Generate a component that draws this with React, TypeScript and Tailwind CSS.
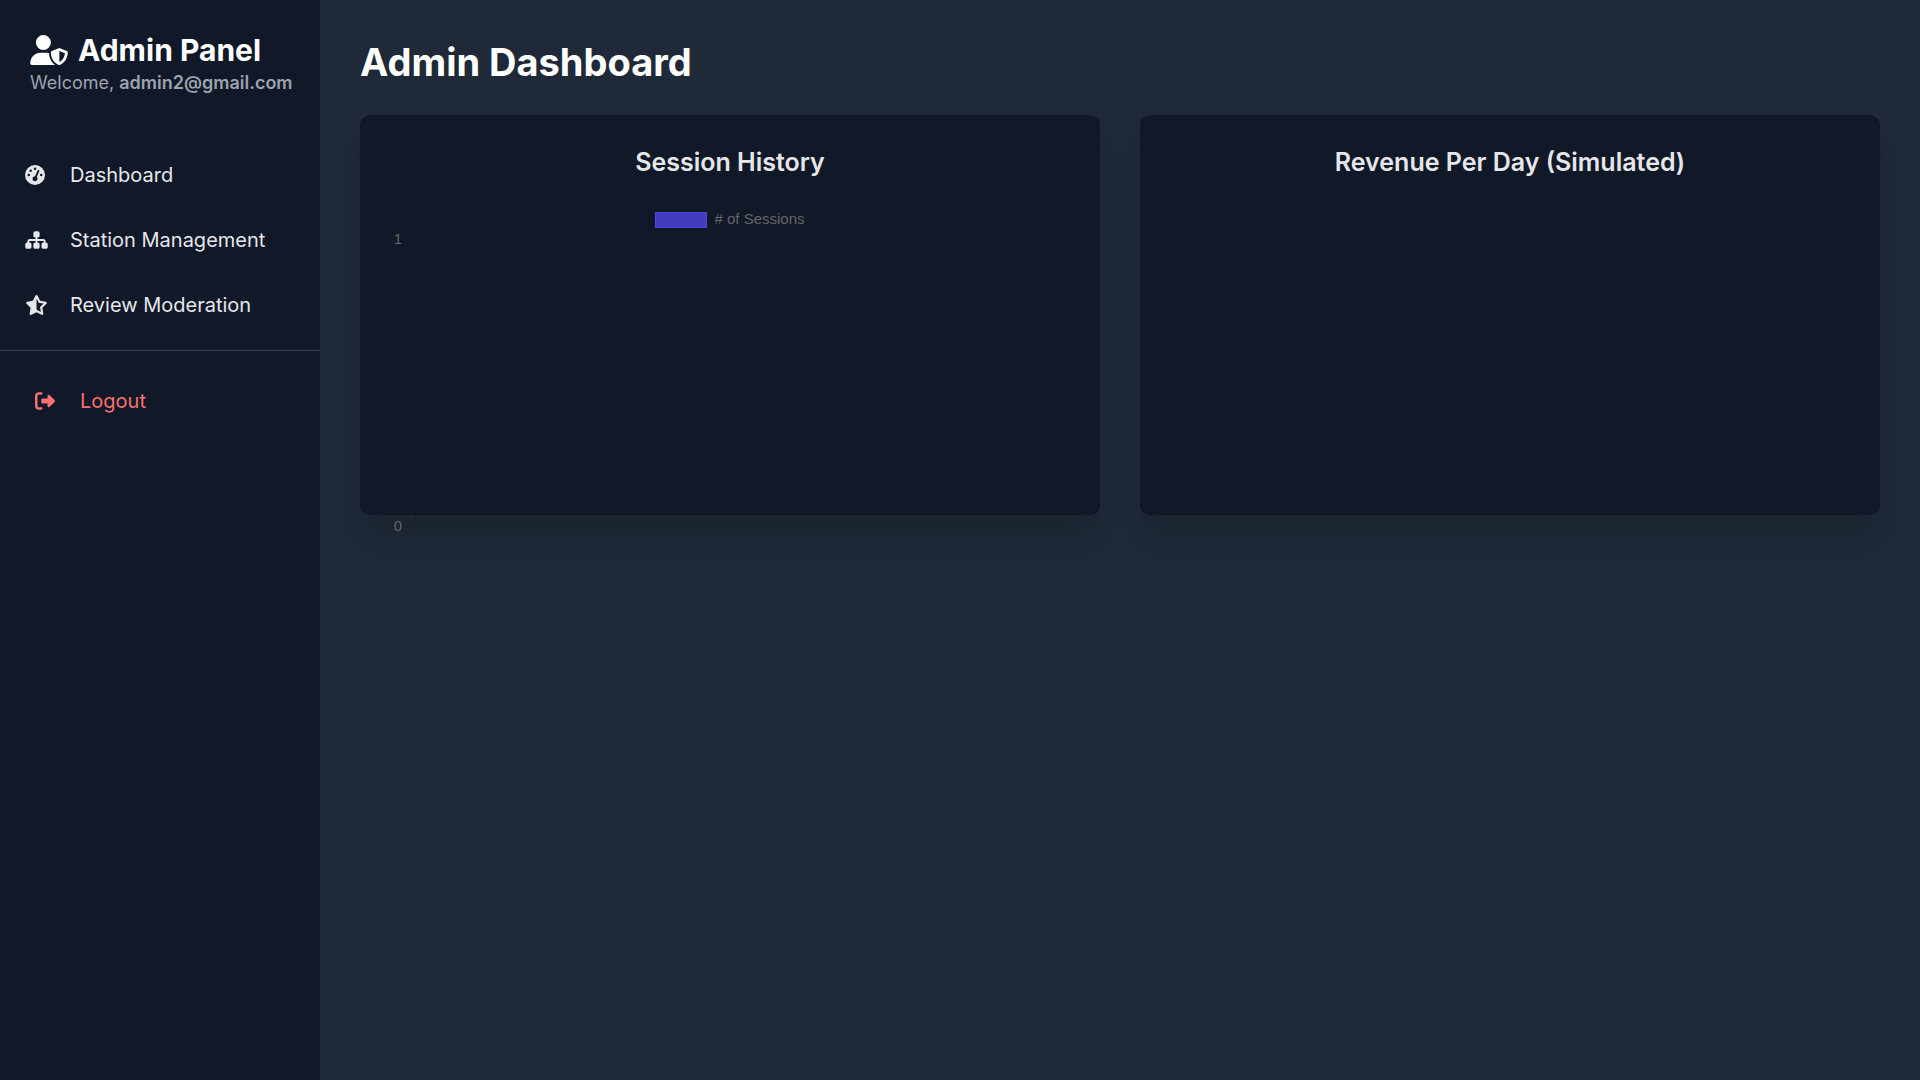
import React from "react";
import {
  FaGaugeHigh,
  FaRightFromBracket,
  FaSitemap,
  FaStarHalfStroke,
  FaUserShield,
} from "react-icons/fa6";

const navItems = [
  { label: "Dashboard", icon: <FaGaugeHigh className="h-5 w-5" /> },
  { label: "Station Management", icon: <FaSitemap className="h-5 w-[23px]" /> },
  { label: "Review Moderation", icon: <FaStarHalfStroke className="h-5 w-[23px]" /> },
];

function Sidebar() {
  return (
    <aside className="w-80 shrink-0 bg-[#111827]">
      <header className="px-[30px] pt-[30px] pb-[30px]">
        <h2 className="flex items-center gap-[10px] text-[30px] leading-10 font-bold text-white">
          <FaUserShield className="h-[30px] w-[38px] shrink-0" />
          Admin Panel
        </h2>
        <p className="text-[18px] leading-[25px] whitespace-nowrap text-[#9ca3af]">
          Welcome, <strong className="font-semibold">admin2@gmail.com</strong>
        </p>
      </header>
      <nav className="flex flex-col gap-[5px] pt-5 pb-[15px]">
        {navItems.map((item) => (
          <a
            key={item.label}
            href="#"
            className="flex h-[60px] items-center px-[25px] text-xl text-[#e5e7eb]"
          >
            <span className="mr-[15px] w-[30px]">{item.icon}</span>
            {item.label}
          </a>
        ))}
      </nav>
      <div className="border-t border-[#374151] px-[10px] py-5">
        <a href="#" className="flex h-[60px] items-center px-[25px] text-xl text-[#f87171]">
          <span className="mr-[15px] w-[30px]">
            <FaRightFromBracket className="h-5 w-5" />
          </span>
          Logout
        </a>
      </div>
    </aside>
  );
}

function SessionChart() {
  return (
    <figure className="font-['Liberation_Sans',Arial,sans-serif] text-[15px] text-[#666666]">
      <figcaption className="flex h-[39px] items-start justify-center gap-[7px] pt-3 leading-[14px]">
        <span className="h-4 w-[52px] border border-[#4f46e5] bg-[#433dbe]" />
        # of Sessions
      </figcaption>
      <svg className="block h-[300px] w-full overflow-visible" role="img" aria-label="Sessions chart">
        <text x="12" y="5" textAnchor="end" fill="currentColor">
          1
        </text>
        <text x="12" y="292" textAnchor="end" fill="currentColor">
          0
        </text>
        <g fill="#000000" fillOpacity="0.1">
          <rect x="16" y="0" width="100%" height="1" className="[width:calc(100%-16px)]" />
          <rect x="16" y="288" width="100%" height="1" className="[width:calc(100%-16px)]" />
          <rect x="25" y="0" width="1" height="288" />
        </g>
      </svg>
    </figure>
  );
}

function Card({ title, children }: { title: string; children?: React.ReactNode }) {
  return (
    <section className="h-[400px] min-w-0 rounded-[10px] bg-[#111827] p-[30px] shadow-[0_25px_31px_-6px_rgba(0,0,0,0.1),0_10px_12px_-6px_rgba(0,0,0,0.04)]">
      <h2 className="mb-5 text-center text-[25px] leading-[35px] font-semibold text-[#e5e7eb]">
        {title}
      </h2>
      {children}
    </section>
  );
}

export default function App() {
  return (
    <div className="flex min-h-screen bg-[#1f2937] font-['Inter',sans-serif]">
      <Sidebar />
      <main className="min-w-0 flex-1 p-10">
        <h1 className="mb-[30px] text-[38px] leading-[45px] font-bold text-white">
          Admin Dashboard
        </h1>
        <div className="grid grid-cols-2 gap-10">
          <Card title="Session History">
            <SessionChart />
          </Card>
          <Card title="Revenue Per Day (Simulated)" />
        </div>
      </main>
    </div>
  );
}
